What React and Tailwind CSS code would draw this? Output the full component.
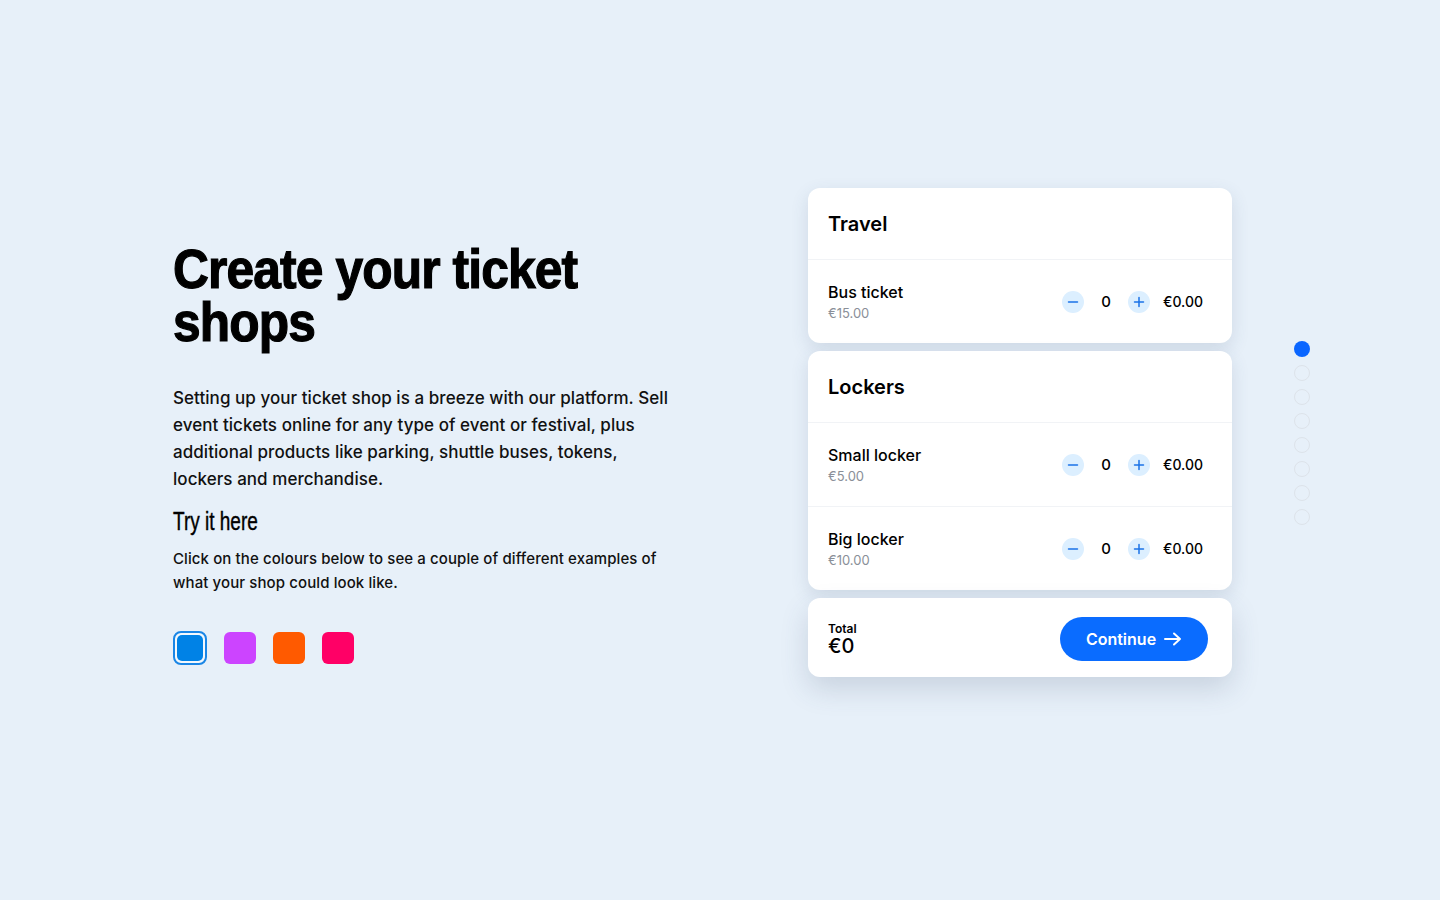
import { useState } from 'react';

const swatches = ['#0082e6', '#cc44ff', '#ff5a00', '#ff0066'];

function Stepper() {
  return (
    <div className="flex items-center">
      <button className="w-[22px] h-[22px] rounded-full bg-[#dcefff] flex items-center justify-center text-[#1a73e8]">
        <svg width="12" height="12" viewBox="0 0 12 12"><path d="M1.5 6h9" stroke="currentColor" strokeWidth="1.5" strokeLinecap="round" /></svg>
      </button>
      <span className="w-[44px] text-center text-[15px] font-medium text-black translate-y-[1px]">0</span>
      <button className="w-[22px] h-[22px] rounded-full bg-[#dcefff] flex items-center justify-center text-[#1a73e8]">
        <svg width="12" height="12" viewBox="0 0 12 12"><path d="M1.5 6h9M6 1.5v9" stroke="currentColor" strokeWidth="1.5" strokeLinecap="round" /></svg>
      </button>
      <span className="ml-[13px] text-[14px] font-medium text-black">€0.00</span>
    </div>
  );
}

function Row({ name, price }) {
  return (
    <div className="h-[84px] pl-5 pr-[29px] flex items-center justify-between border-t border-[#f1f3f6]">
      <div className="flex flex-col">
        <span className="text-[16px] font-medium text-black leading-[22px]">{name}</span>
        <span className="text-[13px] text-[#8a8f98] leading-[20px]">{price}</span>
      </div>
      <Stepper />
    </div>
  );
}

function Card({ title, children }) {
  return (
    <div className="bg-white rounded-[12px] shadow-[0_6px_18px_rgba(60,80,110,0.14)]">
      <div className="h-[71px] px-5 flex items-center">
        <span className="text-[20px] font-semibold text-black">{title}</span>
      </div>
      {children}
    </div>
  );
}

export default function App() {
  const [active, setActive] = useState(0);
  return (
    <div className="min-h-screen w-full bg-[#e7f0f9] flex items-start pl-[173px] font-['Inter',sans-serif]">
      <div className="w-[498px] pt-[242px]">
        <h1 className="font-['Liberation_Sans',sans-serif] font-bold text-[56px] leading-[53px] tracking-[-1px] text-black origin-left scale-x-[0.888] w-[490px] [-webkit-text-stroke:1.2px_black]">
          Create your ticket shops
        </h1>
        <p className="mt-[37px] text-[17px] leading-[27px] font-medium text-[#111] tracking-[0.05px]">
          Setting up your ticket shop is a breeze with our platform. Sell event tickets online for any type of event or festival, plus additional products like parking, shuttle buses, tokens, lockers and merchandise.
        </p>
        <h2 className="mt-[12px] font-['Liberation_Sans',sans-serif] text-[25px] leading-[32px] text-black origin-left scale-x-[0.76] [-webkit-text-stroke:0.4px_black]">
          Try it here
        </h2>
        <p className="mt-[10px] text-[15px] leading-[24px] font-medium text-[#111] tracking-[0.1px] w-[495px]">
          Click on the colours below to see a couple of different examples of what your shop could look like.
        </p>
        <div className="mt-[36px] flex items-center gap-[17px]">
          {swatches.map((c, i) =>
            i === active ? (
              <button
                key={c}
                onClick={() => setActive(i)}
                className="w-[34px] h-[34px] rounded-[8px] border-2 border-[#1a86e6] p-[2px] bg-[#f3f8fd]"
              >
                <span className="block w-full h-full rounded-[5px]" style={{ backgroundColor: c }} />
              </button>
            ) : (
              <button
                key={c}
                onClick={() => setActive(i)}
                className="w-[32px] h-[32px] rounded-[6px]"
                style={{ backgroundColor: c }}
              />
            )
          )}
        </div>
      </div>

      <div className="ml-[137px] pt-[188px] flex items-center">
        <div className="w-[424px] flex flex-col gap-2">
          <Card title="Travel">
            <Row name="Bus ticket" price="€15.00" />
          </Card>
          <Card title="Lockers">
            <Row name="Small locker" price="€5.00" />
            <Row name="Big locker" price="€10.00" />
          </Card>
          <div className="bg-white rounded-[12px] h-[79px] pl-5 pr-[24px] flex items-center justify-between shadow-[0_12px_28px_rgba(60,80,110,0.18)]">
            <div className="flex flex-col pt-[3px]">
              <span className="text-[12px] font-semibold leading-[14px] text-black">Total</span>
              <span className="text-[20px] font-medium leading-[20px] text-black">€0</span>
            </div>
            <button className="w-[148px] h-[44px] mt-[2px] rounded-full bg-[#0a6cff] text-white text-[16px] font-semibold flex items-center justify-center gap-2">
              Continue
              <svg width="18" height="14" viewBox="0 0 18 14" fill="none"><path d="M1 7h15M10 1.5 16 7l-6 5.5" stroke="white" strokeWidth="2" strokeLinecap="round" strokeLinejoin="round" /></svg>
            </button>
          </div>
        </div>
        <div className="ml-[62px] flex flex-col gap-2">
          {Array.from({ length: 8 }).map((_, i) => (
            <span
              key={i}
              className={`w-4 h-4 rounded-full ${i === 0 ? 'bg-[#0a66ff]' : 'border border-[#dde3ea]'}`}
            />
          ))}
        </div>
      </div>
    </div>
  );
}
